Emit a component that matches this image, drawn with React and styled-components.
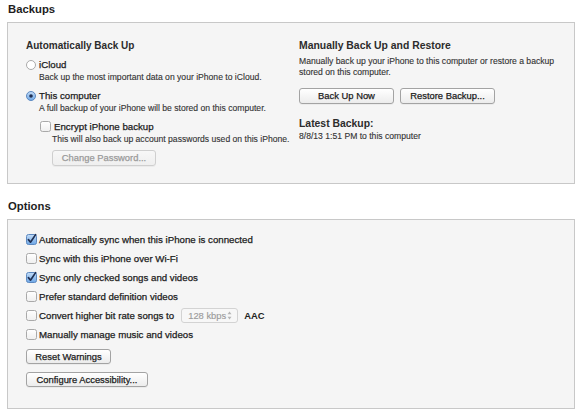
import React from 'react';
import styled, { createGlobalStyle } from 'styled-components';

const GlobalStyle = createGlobalStyle`
  html, body {
    margin: 0;
    padding: 0;
    background: #ffffff;
  }
  body {
    font-family: "Liberation Sans", Arial, sans-serif;
    color: #222222;
  }
`;

const Page = styled.div`
  width: 580px;
  height: 413px;
  padding: 2px 5px 0 7px;
  box-sizing: border-box;
  overflow: hidden;
`;

const SectionTitle = styled.h2`
  margin: ${({ $top }) => $top || 0}px 0 6px 1px;
  font-size: 11.3px;
  line-height: 14px;
  font-weight: bold;
  color: #1e1e1e;
`;

const Panel = styled.div`
  background: #f5f5f5;
  border: 1px solid #c8c8c8;
  box-sizing: border-box;
  width: 568px;
`;

const BackupsPanel = styled(Panel)`
  display: grid;
  grid-template-columns: 273px 1fr;
  padding: 17px 0 17px 18px;
`;

const OptionsPanel = styled(Panel)`
  display: flex;
  flex-direction: column;
  align-items: flex-start;
  padding: 10px 0 21px 18px;
`;

const Column = styled.div`
  display: flex;
  flex-direction: column;
  align-items: flex-start;
`;

const SubTitle = styled.div`
  font-size: ${({ $size }) => $size || 10}px;
  line-height: ${({ $lh }) => $lh || 12}px;
  font-weight: bold;
  color: #2c2c2c;
  margin-top: ${({ $mt }) => $mt || 0}px;
`;

const ChoiceRow = styled.label`
  display: flex;
  align-items: center;
  gap: ${({ $gap }) => $gap || 3}px;
  height: ${({ $h }) => $h || 13}px;
  font-size: 9.7px;
  color: #1c1c1c;
  -webkit-text-stroke: 0.25px #1c1c1c;
  margin-top: ${({ $mt }) => $mt || 0}px;
  margin-left: ${({ $ml }) => $ml || 0}px;
  white-space: nowrap;
`;

const Desc = styled.div`
  font-size: 8.6px;
  line-height: ${({ $lh }) => $lh || 12}px;
  color: #333333;
  -webkit-text-stroke: 0.12px #333333;
  margin-left: ${({ $ml }) => $ml || 0}px;
  margin-top: ${({ $mt }) => $mt || 0}px;
  white-space: nowrap;
`;

const Button = styled.button`
  height: ${({ $h }) => $h || 16}px;
  width: ${({ $w }) => $w}px;
  padding: 0;
  margin-top: ${({ $mt }) => $mt || 0}px;
  margin-left: ${({ $ml }) => $ml || 0}px;
  font-family: "Liberation Sans", Arial, sans-serif;
  font-size: 9.4px;
  color: ${({ disabled }) => (disabled ? '#9a9a9a' : '#1c1c1c')};
  -webkit-text-stroke: 0.25px ${({ disabled }) => (disabled ? '#9a9a9a' : '#1c1c1c')};
  background: ${({ disabled }) =>
    disabled
      ? 'linear-gradient(#f7f7f7, #efefef)'
      : 'linear-gradient(#ffffff, #ececec)'};
  border: 1px solid ${({ disabled }) => (disabled ? '#cfcfcf' : '#a3a3a3')};
  border-radius: 3px;
  box-shadow: 0 1px 0 rgba(0, 0, 0, 0.04);
  box-sizing: border-box;
  line-height: 1;
`;

const ButtonRow = styled.div`
  display: flex;
  gap: 6px;
  margin-top: 10px;
`;

const InlineSelect = styled.div`
  display: flex;
  align-items: center;
  justify-content: space-between;
  width: 57px;
  height: 15px;
  box-sizing: border-box;
  padding: 0 5px 0 6px;
  margin: 0 4px 0 5px;
  background: #f7f7f7;
  border: 1px solid #d3d3d3;
  border-radius: 3px;
  color: #9c9c9c;
  -webkit-text-stroke: 0.15px #9c9c9c;
  font-size: 9.4px;
`;

const Suffix = styled.span`
  font-weight: bold;
  font-size: 9.4px;
  color: #222;
  -webkit-text-stroke: 0;
`;

const OptionList = styled.div`
  display: flex;
  flex-direction: column;
`;

const CheckBox = ({ checked }) => (
  <svg width="11" height="11" viewBox="0 0 11 11" style={{ flex: 'none', overflow: 'visible' }}>
    <defs>
      <linearGradient id="cbBlue" x1="0" y1="0" x2="0" y2="1">
        <stop offset="0" stopColor="#c4ddf8" />
        <stop offset="1" stopColor="#6ea7e6" />
      </linearGradient>
      <linearGradient id="cbWhite" x1="0" y1="0" x2="0" y2="1">
        <stop offset="0" stopColor="#ffffff" />
        <stop offset="1" stopColor="#efefef" />
      </linearGradient>
    </defs>
    <rect
      x="0.5"
      y="0.5"
      width="10"
      height="10"
      rx="2"
      fill={checked ? 'url(#cbBlue)' : 'url(#cbWhite)'}
      stroke={checked ? '#5d89c0' : '#a9a9a9'}
    />
    {checked && (
      <path
        d="M2.4 5.6 L4.5 8.2 L9.6 0.6"
        fill="none"
        stroke="#1f2f52"
        strokeWidth="1.7"
        strokeLinecap="round"
        strokeLinejoin="round"
      />
    )}
  </svg>
);

const Radio = ({ checked }) => (
  <svg width="10" height="10" viewBox="0 0 10 10" style={{ flex: 'none' }}>
    <defs>
      <linearGradient id="rdBlue" x1="0" y1="0" x2="0" y2="1">
        <stop offset="0" stopColor="#c4ddf8" />
        <stop offset="1" stopColor="#6ea7e6" />
      </linearGradient>
    </defs>
    <circle
      cx="5"
      cy="5"
      r="4.5"
      fill={checked ? 'url(#rdBlue)' : '#ffffff'}
      stroke={checked ? '#5d89c0' : '#a9a9a9'}
    />
    {checked && <circle cx="5" cy="5" r="1.8" fill="#1f2f52" />}
  </svg>
);

const Stepper = () => (
  <svg width="5" height="9" viewBox="0 0 5 9">
    <path d="M2.5 0.5 L4.5 3.3 L0.5 3.3 Z" fill="#b5b5b5" />
    <path d="M2.5 8.5 L4.5 5.7 L0.5 5.7 Z" fill="#b5b5b5" />
  </svg>
);

const options = [
  { label: 'Automatically sync when this iPhone is connected', checked: true },
  { label: 'Sync with this iPhone over Wi-Fi', checked: false },
  { label: 'Sync only checked songs and videos', checked: true },
  { label: 'Prefer standard definition videos', checked: false },
  { label: 'Convert higher bit rate songs to', checked: false, bitrate: true },
  { label: 'Manually manage music and videos', checked: false },
];

const App = () => (
  <>
    <GlobalStyle />
    <Page>
      <SectionTitle>Backups</SectionTitle>
      <BackupsPanel>
        <Column>
          <SubTitle>Automatically Back Up</SubTitle>
          <ChoiceRow $mt={6} $gap={3}>
            <Radio />
            iCloud
          </ChoiceRow>
          <Desc $ml={13}>Back up the most important data on your iPhone to iCloud.</Desc>
          <ChoiceRow $mt={6} $gap={3}>
            <Radio checked />
            This computer
          </ChoiceRow>
          <Desc $ml={13}>A full backup of your iPhone will be stored on this computer.</Desc>
          <ChoiceRow $mt={6} $ml={14} $gap={3}>
            <CheckBox />
            Encrypt iPhone backup
          </ChoiceRow>
          <Desc $ml={26}>This will also back up account passwords used on this iPhone.</Desc>
          <Button disabled $w={104} $mt={5} $ml={26}>
            Change Password...
          </Button>
        </Column>
        <Column>
          <SubTitle $size={10.4}>Manually Back Up and Restore</SubTitle>
          <Desc $lh={11} $mt={4}>
            Manually back up your iPhone to this computer or restore a backup
            <br />
            stored on this computer.
          </Desc>
          <ButtonRow>
            <Button $w={95}>Back Up Now</Button>
            <Button $w={95}>Restore Backup...</Button>
          </ButtonRow>
          <SubTitle $size={10.4} $lh={13} $mt={13}>
            Latest Backup:
          </SubTitle>
          <Desc $mt={0}>8/8/13 1:51 PM to this computer</Desc>
        </Column>
      </BackupsPanel>

      <SectionTitle $top={15}>Options</SectionTitle>
      <OptionsPanel>
        <OptionList>
          {options.map(o => (
            <ChoiceRow key={o.label} $h={19} $gap={2}>
              <CheckBox checked={o.checked} />
              {o.label}
              {o.bitrate && (
                <>
                  <InlineSelect>
                    128 kbps
                    <Stepper />
                  </InlineSelect>
                  <Suffix>AAC</Suffix>
                </>
              )}
            </ChoiceRow>
          ))}
        </OptionList>
        <Button $w={85} $h={15} $mt={5}>
          Reset Warnings
        </Button>
        <Button $w={122} $h={15} $mt={8}>
          Configure Accessibility...
        </Button>
      </OptionsPanel>
    </Page>
  </>
);

export default App;
